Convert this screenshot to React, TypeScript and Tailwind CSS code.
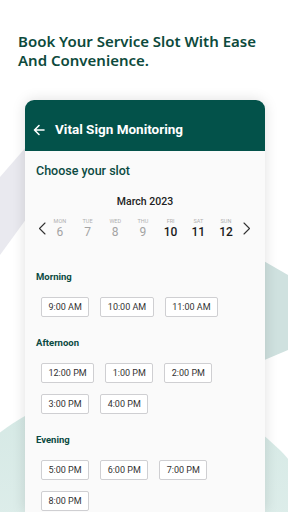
import React from 'react';

const days = [
  { name: 'MON', num: 6, past: true },
  { name: 'TUE', num: 7, past: true },
  { name: 'WED', num: 8, past: true },
  { name: 'THU', num: 9, past: true },
  { name: 'FRI', num: 10, past: false },
  { name: 'SAT', num: 11, past: false },
  { name: 'SUN', num: 12, past: false },
];

const sections = [
  { label: 'Morning', rows: [['9:00 AM', '10:00 AM', '11:00 AM']] },
  { label: 'Afternoon', rows: [['12:00 PM', '1:00 PM', '2:00 PM'], ['3:00 PM', '4:00 PM']] },
  { label: 'Evening', rows: [['5:00 PM', '6:00 PM', '7:00 PM'], ['8:00 PM']] },
];

const Backdrop: React.FC = () => (
  <svg className="absolute inset-0" width="288" height="512" viewBox="0 0 288 512">
    <defs>
      <linearGradient id="tealFade" x1="0" y1="0" x2="0" y2="1">
        <stop offset="0" stopColor="#d4e8e4" />
        <stop offset="1" stopColor="#f1f8f7" />
      </linearGradient>
    </defs>
    <polygon points="40,131 0,177 0,255 40,200" fill="#e9e9ef" />
    <polygon points="255,256 288,275 288,350 255,364" fill="#cfe1df" />
    <circle cx="130" cy="600" r="212" fill="url(#tealFade)" />
  </svg>
);

const SlotButton: React.FC<{ time: string }> = ({ time }) => (
  <div className="h-[20px] min-w-[48px] px-[6.5px] flex items-center justify-center border border-[#cfcfd2] rounded-[2px] bg-white text-[9px] text-[#333] leading-none">
    {time}
  </div>
);

const App: React.FC = () => {
  return (
    <div
      className="relative w-[288px] h-[512px] overflow-hidden bg-white"
      style={{ fontFamily: 'Roboto, "Liberation Sans", sans-serif' }}
    >
      <Backdrop />
      <div className="relative flex flex-col h-full">
        <h1
          className="pt-[32px] pl-[18px] pr-2 text-[15px] leading-[19px] font-semibold text-[#0d4a3c]"
          style={{ fontFamily: '"Noto Sans", sans-serif' }}
        >
          Book Your Service Slot With Ease
          <br />
          And Convenience.
        </h1>

        <div className="mt-[30px] ml-[25px] w-[240px] flex-1 flex flex-col rounded-t-[9px] overflow-hidden bg-[#fafafa] shadow-[0_0_14px_rgba(0,0,0,0.13)]">
          <div className="h-[51px] bg-[#03524a] flex items-center pt-[8px] pl-[8px] text-white">
            <svg width="12" height="12" viewBox="0 0 12 12" fill="none" stroke="white" strokeWidth="1.6" strokeLinecap="round" strokeLinejoin="round">
              <path d="M11 6H1.5M6 1.5 1.5 6 6 10.5" />
            </svg>
            <span className="ml-[10px] text-[13.5px] font-bold">Vital Sign Monitoring</span>
          </div>

          <div className="px-[11px] pt-[12px]">
            <div className="text-[12.5px] font-medium text-[#0b4a42] leading-[16px]">Choose your slot</div>

            <div className="mt-[16px] text-center text-[10.5px] font-medium text-[#222] leading-[14px]">March 2023</div>

            <div className="mt-[8px] -ml-[11px] flex items-center">
              <svg className="ml-[13px]" width="8" height="13" viewBox="0 0 8 13" fill="none" stroke="#333" strokeWidth="1.1" strokeLinecap="round" strokeLinejoin="round">
                <path d="M7 1 1.5 6.5 7 12" />
              </svg>
              <div className="flex">
                {days.map((d) => (
                  <div key={d.name} className="w-[27.7px] flex flex-col items-center">
                    <span className="text-[5.5px] leading-[8px] text-[#b0b0b0]">{d.name}</span>
                    <span className={`text-[12px] leading-[15px] ${d.past ? 'text-[#a3a3a3]' : 'text-[#1a1a1a] font-medium'}`}>
                      {d.num}
                    </span>
                  </div>
                ))}
              </div>
              <svg className="ml-[3px]" width="8" height="13" viewBox="0 0 8 13" fill="none" stroke="#333" strokeWidth="1.1" strokeLinecap="round" strokeLinejoin="round">
                <path d="M1 1 6.5 6.5 1 12" />
              </svg>
            </div>

            <div className="mt-[31px] flex flex-col">
              {sections.map((s, i) => (
                <div key={s.label} className={i > 0 ? 'mt-[20px]' : ''}>
                  <div className="text-[9.5px] font-bold text-[#0b4a42] leading-[12px]">{s.label}</div>
                  <div className="mt-[14px] pl-[5px] flex flex-col gap-[11px]">
                    {s.rows.map((row, ri) => (
                      <div key={ri} className="flex gap-[11px]">
                        {row.map((t) => (
                          <SlotButton key={t} time={t} />
                        ))}
                      </div>
                    ))}
                  </div>
                </div>
              ))}
            </div>
          </div>
        </div>
      </div>
    </div>
  );
};

export default App;
